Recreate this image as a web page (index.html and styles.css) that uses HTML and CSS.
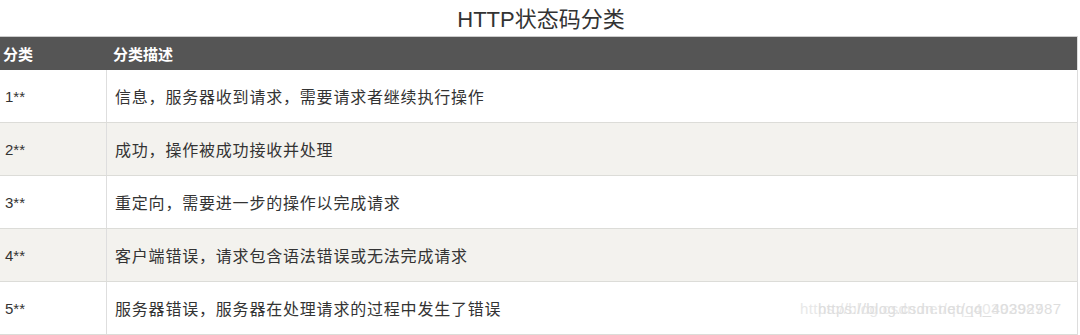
FILE: index.html
```html
<!DOCTYPE html>
<html lang="zh">
<head>
<meta charset="utf-8">
<link rel="stylesheet" href="styles.css">
</head>
<body>
<div class="page">
  <h1 class="title">HTTP状态码分类</h1>
  <div class="table">
    <div class="row head"><div class="c1">分类</div><div class="c2">分类描述</div></div>
    <div class="row"><div class="c1">1**</div><div class="c2">信息，服务器收到请求，需要请求者继续执行操作</div></div>
    <div class="row alt"><div class="c1">2**</div><div class="c2">成功，操作被成功接收并处理</div></div>
    <div class="row"><div class="c1">3**</div><div class="c2">重定向，需要进一步的操作以完成请求</div></div>
    <div class="row alt"><div class="c1">4**</div><div class="c2">客户端错误，请求包含语法错误或无法完成请求</div></div>
    <div class="row"><div class="c1">5**</div><div class="c2">服务器错误，服务器在处理请求的过程中发生了错误</div></div>
  </div>
  <div class="wm">https://blog.csdn.net/qq_40392987</div>
</div>
</body>
</html>
```
FILE: styles.css
```css
* { box-sizing: border-box; }
html, body { margin: 0; padding: 0; background: #fff; }
body { font-family: "Liberation Sans", "Noto Sans CJK SC", sans-serif; color: #333; }
.page { position: relative; width: 1080px; height: 335px; overflow: hidden; }
.title {
  margin: 0;
  height: 36px;
  font-size: 22px;
  font-weight: normal;
  text-align: center;
  line-height: 40px;
  color: #333;
  padding-left: 2px;
}
.table { width: 1078px; border-right: 1px solid #ddd; border-top: 1px solid #ccc; }
.row { display: flex; height: 53px; border-bottom: 1px solid #dcdcd8; font-size: 16px; align-items: stretch; }
.row.alt { background: #f3f2ee; }
.row.head { height: 33px; background: #555; color: #fff; font-weight: bold; border-bottom: none; font-size: 15px; }
.c1 { width: 107px; padding-left: 4px; display: flex; align-items: center; border-right: 1px solid #dedede; }
.head .c1 { border-right: none; padding-left: 3px; }
.c2 { flex: 1; padding-left: 8px; display: flex; align-items: center; }
.row:not(.head) .c1 { padding-left: 5px; font-size: 15px; }
.row:not(.head) .c2 { letter-spacing: 0.8px; }
.head .c2 { padding-left: 6px; }
.wm {
  position: absolute; left: 818px; top: 300px;
  font-size: 15px; color: #dedede; letter-spacing: 0.4px; white-space: nowrap;
  text-shadow: -18px 0 #e8e8e8;
}
```
